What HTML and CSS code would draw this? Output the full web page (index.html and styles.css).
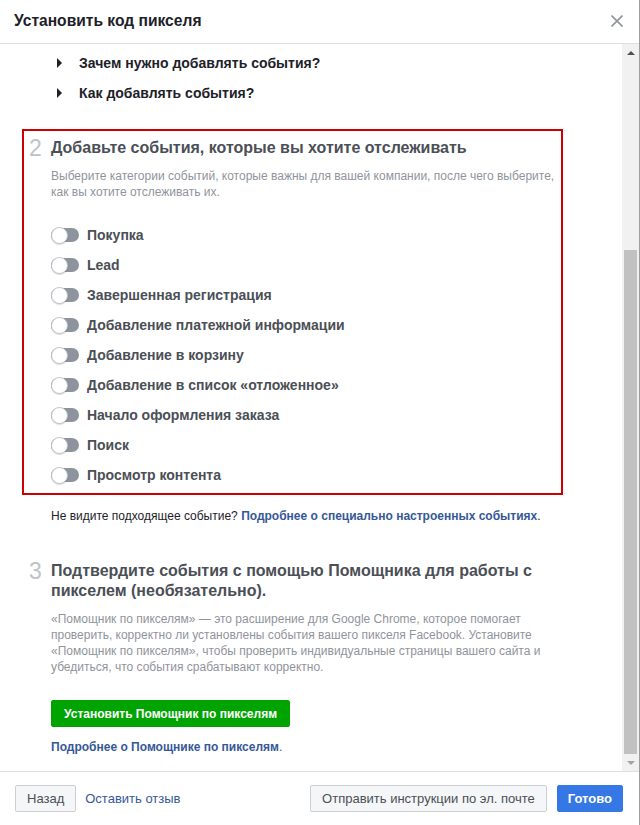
FILE: index.html
```html
<!DOCTYPE html>
<html lang="ru">
<head>
<meta charset="utf-8">
<title>Установить код пикселя</title>
<link rel="stylesheet" href="styles.css">
</head>
<body>
<div class="dialog">
  <header class="dlg-head">
    <h1 class="dlg-title">Установить код пикселя</h1>
    <button class="close" aria-label="Закрыть">
      <svg width="12" height="12" viewBox="0 0 12 12"><path d="M0.5 0.5 L11.5 11.5 M11.5 0.5 L0.5 11.5" stroke="#90949c" stroke-width="1.6" fill="none"/></svg>
    </button>
  </header>
  <div class="dlg-body">
    <div class="scroll-content">
      <ul class="faq">
        <li>Зачем нужно добавлять события?</li>
        <li>Как добавлять события?</li>
      </ul>
      <section class="step step-highlight">
        <div class="step-num">2</div>
        <div class="step-main">
          <h2 class="step-title">Добавьте события, которые вы хотите отслеживать</h2>
          <p class="step-text">Выберите категории событий, которые важны для вашей компании, после чего выберите, как вы хотите отслеживать их.</p>
          <ul class="events">
            <li><span class="toggle"></span>Покупка</li>
            <li><span class="toggle"></span>Lead</li>
            <li><span class="toggle"></span>Завершенная регистрация</li>
            <li><span class="toggle"></span>Добавление платежной информации</li>
            <li><span class="toggle"></span>Добавление в корзину</li>
            <li><span class="toggle"></span>Добавление в список «отложенное»</li>
            <li><span class="toggle"></span>Начало оформления заказа</li>
            <li><span class="toggle"></span>Поиск</li>
            <li><span class="toggle"></span>Просмотр контента</li>
          </ul>
        </div>
      </section>
      <p class="hint">Не видите подходящее событие? <a href="#" class="link link-strong">Подробнее о специально настроенных событиях</a>.</p>
      <section class="step step-third">
        <div class="step-num">3</div>
        <div class="step-main">
          <h2 class="step-title">Подтвердите события с помощью Помощника для работы с пикселем (необязательно).</h2>
          <p class="step-text">«Помощник по пикселям» — это расширение для Google Chrome, которое помогает проверить, корректно ли установлены события вашего пикселя Facebook. Установите «Помощник по пикселям», чтобы проверить индивидуальные страницы вашего сайта и убедиться, что события срабатывают корректно.</p>
          <button class="btn-green">Установить Помощник по пикселям</button>
          <p class="more"><a href="#" class="link link-strong">Подробнее о Помощнике по пикселям</a>.</p>
        </div>
      </section>
    </div>
    <div class="scrollbar">
      <span class="sb-btn"><span class="arrow-up"></span></span>
      <div class="sb-track">
        <div class="sb-space"></div>
        <div class="sb-thumb"></div>
      </div>
      <span class="sb-btn"><span class="arrow-down"></span></span>
    </div>
  </div>
  <footer class="dlg-foot">
    <div class="foot-left">
      <button class="btn">Назад</button>
      <a href="#" class="link foot-link">Оставить отзыв</a>
    </div>
    <div class="foot-right">
      <button class="btn">Отправить инструкции по эл. почте</button>
      <button class="btn btn-primary">Готово</button>
    </div>
  </footer>
</div>
</body>
</html>
```
FILE: styles.css
```css
* { box-sizing: border-box; }

body {
  margin: 0;
  background: #9a9da2;
  font-family: "Liberation Sans", Arial, sans-serif;
}

.dialog {
  width: 639px;
  height: 825px;
  background: #fff;
  display: flex;
  flex-direction: column;
}

.dlg-head {
  height: 44px;
  flex: none;
  border-bottom: 1px solid #dddfe2;
  display: flex;
  align-items: center;
  justify-content: space-between;
  padding: 0 16px 1px 14px;
}

.dlg-title {
  margin: 0;
  font-size: 15.6px;
  font-weight: bold;
  line-height: 20px;
  color: #1d2129;
}

.close {
  border: 0;
  background: none;
  padding: 0;
  width: 12px;
  height: 12px;
  display: flex;
}

.dlg-body {
  height: 727px;
  flex: none;
  display: flex;
}

.scroll-content {
  flex: 1;
  overflow: hidden;
  padding: 4px 0 0 22px;
}

.faq {
  list-style: none;
  margin: 0 0 0 35px;
  padding: 0;
}

.faq li {
  height: 30px;
  display: flex;
  align-items: center;
  font-size: 14px;
  font-weight: bold;
  color: #1d2129;
}

.faq li::before {
  content: "";
  border-left: 5px solid #1d2129;
  border-top: 5px solid transparent;
  border-bottom: 5px solid transparent;
  margin-right: 17px;
}

.step {
  width: 541px;
  border: 2px solid transparent;
  display: flex;
  padding: 7px 4px 3px 5px;
}

.step-highlight {
  margin-top: 21px;
  border-color: #cc0000;
}

.step-third {
  margin-top: 28px;
}

.step-num {
  width: 22px;
  flex: none;
  font-size: 23px;
  line-height: 20px;
  color: #bec3c9;
}

.step-main {
  flex: 1;
}

.step-title {
  margin: 0;
  font-size: 16px;
  line-height: 20px;
  font-weight: bold;
  color: #4b4f56;
}

.step-text {
  margin: 10px 0 0;
  font-size: 12px;
  line-height: 16px;
  color: #90949c;
}

.events {
  list-style: none;
  margin: 20px 0 0;
  padding: 0;
}

.events li {
  height: 30px;
  display: flex;
  align-items: center;
  font-size: 14px;
  font-weight: bold;
  color: #4b4f56;
}

.toggle {
  width: 28px;
  height: 14px;
  border-radius: 7px;
  background: #8d949e;
  margin-right: 8px;
  display: flex;
  align-items: center;
}

.toggle::before {
  content: "";
  width: 15px;
  height: 15px;
  border-radius: 50%;
  background: #fff;
  border: 1px solid #bec3c9;
  box-shadow: 0 1px 1px rgba(0, 0, 0, 0.15);
}

.hint {
  margin: 13px 0 0 29px;
  font-size: 12px;
  line-height: 16px;
  color: #1d2129;
}

.link {
  color: #365899;
  text-decoration: none;
}

.link-strong {
  font-weight: bold;
}

.btn-green {
  display: block;
  margin-top: 25px;
  height: 27px;
  padding: 0 12px;
  background: #00a400;
  border: 1px solid #00a400;
  border-radius: 2px;
  color: #fff;
  font-family: inherit;
  font-size: 12px;
  font-weight: bold;
}

.more {
  margin: 12px 0 0;
  font-size: 12px;
  line-height: 16px;
  color: #365899;
}

.scrollbar {
  width: 17px;
  flex: none;
  background: #f1f1f1;
  display: flex;
  flex-direction: column;
}

.sb-btn {
  height: 17px;
  flex: none;
  display: flex;
  align-items: center;
  justify-content: center;
}

.arrow-up {
  border-bottom: 4px solid #505050;
  border-left: 4px solid transparent;
  border-right: 4px solid transparent;
}

.arrow-down {
  border-top: 4px solid #a3a3a3;
  border-left: 4px solid transparent;
  border-right: 4px solid transparent;
}

.sb-track {
  flex: 1;
  display: flex;
  flex-direction: column;
  padding: 0 2px;
}

.sb-space {
  height: 189px;
  flex: none;
}

.sb-thumb {
  flex: 1;
  background: #c1c1c1;
}

.dlg-foot {
  height: 54px;
  flex: none;
  border-top: 1px solid #dddfe2;
  display: flex;
  align-items: center;
  justify-content: space-between;
  padding: 0 16px 0 15px;
}

.foot-left,
.foot-right {
  display: flex;
  align-items: center;
}

.foot-left { gap: 9px; }
.foot-right { gap: 10px; }

.btn {
  height: 27px;
  padding: 0 11px;
  background: #f5f6f7;
  border: 1px solid #ccd0d5;
  border-radius: 2px;
  color: #4b4f56;
  font-family: inherit;
  font-size: 13px;
}

.btn-primary {
  background: #3578e5;
  border-color: #3578e5;
  color: #fff;
  font-weight: bold;
  padding: 0 10px;
}

.foot-link {
  font-size: 13px;
}
```
